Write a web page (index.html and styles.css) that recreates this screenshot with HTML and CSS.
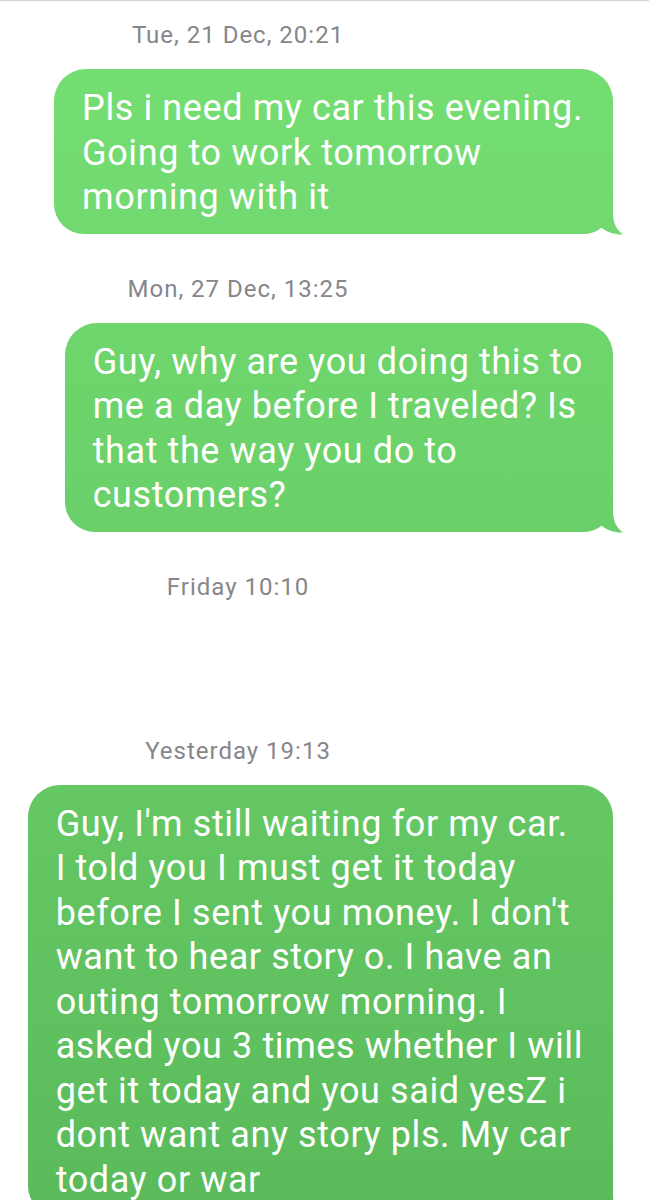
FILE: index.html
```html
<!DOCTYPE html>
<html lang="en">
<head>
  <meta charset="UTF-8">
  <title>Messages</title>
  <link rel="stylesheet" href="styles.css">
</head>
<body>

  <div class="thread">
    <p class="stamp">Tue, 21 Dec, 20:21</p>
    <div class="bubble">Pls i need my car this evening.<br>Going to work tomorrow<br>morning with it</div>

    <p class="stamp">Mon, 27 Dec, 13:25</p>
    <div class="bubble">Guy, why are you doing this to<br>me a day before I traveled? Is<br>that the way you do to<br>customers?</div>

    <p class="stamp gap">Friday 10:10</p>

    <p class="stamp">Yesterday 19:13</p>
    <div class="bubble">Guy, I'm still waiting for my car.<br>I told you I must get it today<br>before I sent you money. I don't<br>want to hear story o. I have an<br>outing tomorrow morning. I<br>asked you 3 times whether I will<br>get it today and you said yesZ i<br>dont want any story pls. My car<br>today or war</div>
  </div>

</body>
</html>
```

FILE: styles.css
```css
* { box-sizing: border-box; }
body {
  margin: 0;
  padding: 0;
  background: #fff;
  font-family: Roboto, 'Noto Sans', sans-serif;
  border-top: 1px solid #d4d4d6;
  overflow: hidden;
}
.thread {
  display: flex;
  flex-direction: column;
  padding-top: 20px;
}
.stamp {
  margin: 0 0 20px;
  width: 476px;
  text-align: center;
  font-size: 24px;
  line-height: 28px;
  letter-spacing: 1px;
  color: #86868b;
}
.stamp.gap {
  margin-bottom: 136px;
}
.bubble {
  position: relative;
  align-self: flex-end;
  margin-right: 36px;
  margin-bottom: 41px;
  padding: 17px 30px 14px 28px;
  border-radius: 32px 32px 30px 30px;
  font-size: 36px;
  line-height: 44.5px;
  letter-spacing: 0.6px;
  color: #fff;
  background: linear-gradient(#76e074, #5bbb5b) fixed;
}
/* little tail at the bottom right */
.bubble::after {
  content: '';
  position: absolute;
  right: -10px;
  bottom: -1px;
  width: 40px;
  height: 32px;
  background: linear-gradient(#76e074, #5bbb5b) fixed;
  clip-path: path('M0 0 H30 V10 C30 20 33 27 40 32 C33 32.5 24 30 18 25 C14 29 8 31 0 31 Z');
}
```
